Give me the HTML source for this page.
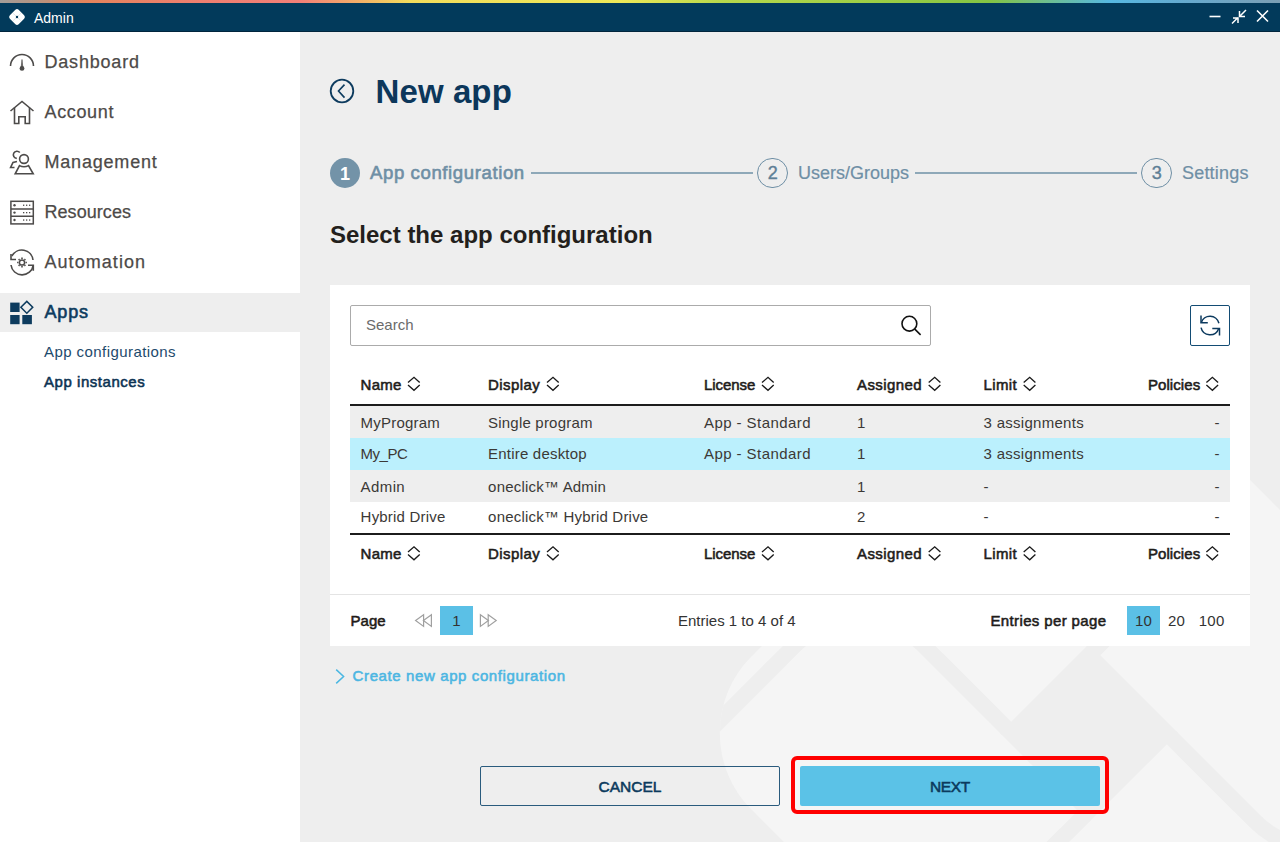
<!DOCTYPE html>
<html><head><meta charset="utf-8">
<style>
*{box-sizing:border-box;margin:0;padding:0}
html,body{width:1280px;height:842px;overflow:hidden;background:#eeeeee;font-family:"Liberation Sans",sans-serif;position:relative}
.a{position:absolute;white-space:nowrap}
.t{position:absolute;white-space:nowrap;line-height:20px;height:20px}
#topstrip{position:absolute;left:0;top:0;width:1280px;height:3px;background:linear-gradient(90deg,#a29c98 0px,#b49482 35px,#e4845c 85px,#ee7f70 200px,#f28078 300px,#f4b068 360px,#f2dc5c 410px,#eee858 620px,#b8d84c 720px,#98cc44 900px,#84c444 990px,#56b8e2 1110px,#64aad0 1180px,#7c9fb4 1280px)}
#titlebar{position:absolute;left:0;top:3px;width:1280px;height:29px;background:#023a5b;border-bottom:1px solid #01253d}
#sidebar{position:absolute;left:0;top:32px;width:300px;height:810px;background:#fff}
.nav{position:absolute;left:44.5px;font-size:18px;color:#4d4a48;-webkit-text-stroke:0.25px #4d4a48}
.sub{position:absolute;left:44px;font-size:15px;color:#1d4a6c}
.panel{position:absolute;left:330px;top:285px;width:920px;height:361px;background:#fff}
.th{position:absolute;font-size:15px;color:#1e1c1a;-webkit-text-stroke-width:0.55px}
.td{position:absolute;font-size:15px;color:#3b3936;letter-spacing:0.2px}
.row{position:absolute;left:350px;width:880px}
</style></head><body>
<!-- watermark -->
<svg class="a" style="left:0;top:0" width="1280" height="842" viewBox="0 0 1280 842">
  <defs>
    <clipPath id="wmclip"><rect x="-293" y="-293" width="586" height="586" rx="109" ry="109"/></clipPath>
  </defs>
  <g transform="translate(1089,733) rotate(45)">
    <g clip-path="url(#wmclip)">
      <rect x="-293" y="-293" width="586" height="586" fill="#f5f5f5"/>
      <rect x="-63" y="-63" width="126" height="126" fill="#eeeeee"/>
      <g fill="none" stroke="#eeeeee" stroke-width="16">
        <path id="tail" d="M60 -55 L180 -55 A90 90 0 0 0 270 -145 L270 -320"/>
        <use href="#tail" transform="rotate(90)"/>
        <use href="#tail" transform="rotate(180)"/>
        <use href="#tail" transform="rotate(270)"/>
      </g>
    </g>
  </g>
</svg>

<div id="topstrip"></div>
<div id="titlebar"></div>
<!-- title logo -->
<svg class="a" style="left:8px;top:8.3px" width="18" height="18" viewBox="0 0 18 18">
  <rect x="2.8" y="2.8" width="12.4" height="12.4" rx="2.3" ry="2.3" fill="#fff" transform="rotate(45 9 9)"/>
  <path d="M5.2 5.4 L12.8 12.6 M12.8 5.4 L5.2 12.6" stroke="#c8d4dc" stroke-width="0.6"/>
  <circle cx="9" cy="9" r="1.2" fill="#023a5b"/>
</svg>
<div class="t" style="left:34px;top:7.5px;font-size:14px;color:#fff">Admin</div>
<!-- window controls -->
<svg class="a" style="left:1200px;top:6px" width="80" height="24" viewBox="0 0 80 24">
  <line x1="9.5" y1="10.5" x2="20.5" y2="10.5" stroke="#fff" stroke-width="1.6"/>
  <g stroke="#fff" stroke-width="1.5" fill="none">
    <path d="M46 4 L39.5 10.5 M39.5 5 L39.5 10.5 L45 10.5"/>
    <path d="M32 17.5 L38 11.5 M33 12 L38 12 L38 17"/>
  </g>
  <path d="M57 4.5 L68 15.5 M68 4.5 L57 15.5" stroke="#fff" stroke-width="1.6"/>
</svg>

<div id="sidebar"></div>
<div class="a" style="left:0;top:293px;width:300px;height:39px;background:#eeeeee"></div>

<!-- sidebar icons -->
<svg class="a" style="left:0;top:40px" width="44" height="300" viewBox="0 40 44 300" fill="none" stroke="#4d4b4a" stroke-width="1.6">
  <!-- dashboard -->
  <path d="M10.5 66 A11.5 11.5 0 1 1 33.5 66"/>
  <path d="M21.2 67 L22 59.5 L22.8 67 Z" fill="#4d4b4a" stroke-width="0.6"/>
  <circle cx="22" cy="68.4" r="2.4" fill="#4d4b4a" stroke="none"/>
  <!-- account -->
  <path d="M10.5 111 L22 101.5 L33.5 111"/>
  <path d="M14.5 107.5 L14.5 123.5 L18.8 123.5 L18.8 116.8 L25.2 116.8 L25.2 123.5 L29.5 123.5 L29.5 107.5"/>
  <!-- management -->
  <circle cx="24" cy="159" r="4.4"/>
  <path d="M15.2 173.8 L33.2 173.8 L28.5 165.6 Q24 168 19.5 165.6 Z"/>
  <path d="M19.8 152.6 A3.6 3.6 0 1 0 16.8 158.4"/>
  <path d="M17 161.5 L13 162.5 L10.6 167.5 L14.5 167.5"/>
  <!-- resources -->
  <rect x="10.9" y="201.3" width="22.4" height="22.6" stroke-width="1.5"/>
  <path d="M11 208.9 L33 208.9 M11 216.3 L33 216.3" stroke-width="1.5"/>
  <g fill="#4d4b4a" stroke="none">
    <circle cx="14.5" cy="205.2" r="1.2"/><circle cx="14.5" cy="212.6" r="1.2"/><circle cx="14.5" cy="220" r="1.2"/>
    <rect x="23" y="204.6" width="1.3" height="1.3"/><rect x="26" y="204.6" width="1.3" height="1.3"/><rect x="29" y="204.6" width="1.3" height="1.3"/>
    <rect x="23" y="212" width="1.3" height="1.3"/><rect x="26" y="212" width="1.3" height="1.3"/><rect x="29" y="212" width="1.3" height="1.3"/>
    <rect x="23" y="219.4" width="1.3" height="1.3"/><rect x="26" y="219.4" width="1.3" height="1.3"/><rect x="29" y="219.4" width="1.3" height="1.3"/>
  </g>
  <!-- automation -->
  <path d="M12 256 A11.2 11.2 0 0 1 33 260"/>
  <path d="M11 254 L11 259.5 L16 259.5"/>
  <path d="M11 265 A11.2 11.2 0 0 0 33.2 265.3"/>
  <path d="M28 265.2 L33.3 265.2 L33.3 270.8"/>
  <circle cx="22" cy="262.5" r="2.6" stroke-width="1.5"/>
  <path d="M22 257.6 V259 M22 266 V267.4 M17.1 262.5 H18.5 M25.5 262.5 H26.9 M18.6 259.1 L19.5 260 M24.5 265 L25.4 265.9 M25.4 259.1 L24.5 260 M19.5 265 L18.6 265.9" stroke-width="1.6"/>
</svg>
<!-- apps icon -->
<svg class="a" style="left:0;top:290px" width="44" height="40" viewBox="0 290 44 40">
  <rect x="10.2" y="302.6" width="9.4" height="9.4" fill="#0d3b5e"/>
  <rect x="10.2" y="315" width="9.4" height="9.2" fill="#0d3b5e"/>
  <rect x="22.3" y="315" width="9.6" height="9.2" fill="#0d3b5e"/>
  <rect x="22.6" y="303.1" width="8.4" height="8.4" fill="none" stroke="#0d3b5e" stroke-width="1.5" transform="rotate(45 26.8 307.3)"/>
</svg>

<div class="nav t" style="top:51.8px;letter-spacing:0.8px">Dashboard</div>
<div class="nav t" style="top:101.8px;letter-spacing:0.65px">Account</div>
<div class="nav t" style="top:151.8px;letter-spacing:0.8px">Management</div>
<div class="nav t" style="top:201.8px;letter-spacing:0.05px">Resources</div>
<div class="nav t" style="top:251.8px;letter-spacing:1.05px">Automation</div>
<div class="nav t" style="top:302.2px;color:#0d3b5e;-webkit-text-stroke:0.6px #0d3b5e;letter-spacing:0.82px">Apps</div>
<div class="sub t" style="top:342.4px;letter-spacing:0.43px">App configurations</div>
<div class="sub t" style="top:371.8px;color:#0c3353;-webkit-text-stroke-width:0.55px;letter-spacing:0.54px">App instances</div>

<!-- header -->
<svg class="a" style="left:328px;top:77px" width="28" height="28" viewBox="0 0 28 28">
  <circle cx="14" cy="14" r="11.3" fill="none" stroke="#0d3b5e" stroke-width="1.8"/>
  <path d="M16.5 7.6 L10.5 14 L16.5 20.6" fill="none" stroke="#0d3b5e" stroke-width="1.6"/>
</svg>
<div class="a" style="left:375.5px;top:74px;font-size:33px;line-height:36px;font-weight:bold;color:#0c375b;letter-spacing:0.1px">New app</div>

<!-- stepper -->
<div class="a" style="left:329.7px;top:158px;width:30px;height:30px;border-radius:50%;background:#7393a8;color:#fff;font-weight:bold;font-size:18px;line-height:32px;text-align:center;padding-left:0.5px">1</div>
<div class="t" style="left:370px;top:163px;font-size:18.6px;color:#6e8fa5;-webkit-text-stroke-width:0.6px;letter-spacing:0.59px">App configuration</div>
<div class="a" style="left:531px;top:172px;width:221.5px;height:1.5px;background:#8ea8b8"></div>
<div class="a" style="left:757.4px;top:157.8px;width:30.7px;height:30.7px;border-radius:50%;border:1.5px solid #6e8fa5;color:#5e7f96;font-size:18px;line-height:29.5px;text-align:center;-webkit-text-stroke:0.4px #5e7f96">2</div>
<div class="t" style="left:798px;top:163px;font-size:18px;color:#6e8fa5;-webkit-text-stroke:0.2px #6e8fa5">Users/Groups</div>
<div class="a" style="left:915px;top:172px;width:222px;height:1.5px;background:#8ea8b8"></div>
<div class="a" style="left:1141.4px;top:157.8px;width:30.7px;height:30.7px;border-radius:50%;border:1.5px solid #6e8fa5;color:#5e7f96;font-size:18px;line-height:29.5px;text-align:center;-webkit-text-stroke:0.4px #5e7f96">3</div>
<div class="t" style="left:1182px;top:163px;font-size:18px;color:#6e8fa5;-webkit-text-stroke:0.2px #6e8fa5;letter-spacing:0.2px">Settings</div>

<div class="t" style="left:330px;top:222.2px;font-size:24px;line-height:26px;height:26px;font-weight:bold;color:#231f1c">Select the app configuration</div>

<!-- panel -->
<div class="panel"></div>
<div class="a" style="left:350px;top:305px;width:581px;height:41px;border:1px solid #a9a9a9;border-top-width:1.6px;border-bottom-width:1.6px;border-color:#ababab;border-radius:2px;background:#fff"></div>
<div class="t" style="left:366px;top:315.3px;font-size:15px;color:#6b6b6b">Search</div>
<svg class="a" style="left:896px;top:310px" width="30" height="30" viewBox="0 0 30 30">
  <circle cx="13.4" cy="13.7" r="7.4" fill="none" stroke="#111" stroke-width="1.6"/>
  <path d="M18.8 19.2 L24.6 24.8" stroke="#111" stroke-width="1.6"/>
</svg>
<div class="a" style="left:1190px;top:305px;width:40px;height:40.5px;border:1.4px solid #134c74;border-radius:2px"></div>
<svg class="a" style="left:1190px;top:305px" width="40" height="40" viewBox="1190 305 40 40" fill="none" stroke="#0c3a5e" stroke-width="1.5">
  <path d="M1201.25 322.66 A9.2 9.2 0 0 1 1218.93 323.27"/>
  <path d="M1201 315.5 L1201 322.8 L1207.8 322.8"/>
  <path d="M1201.04 327.57 A9.2 9.2 0 0 0 1218.64 328.65"/>
  <path d="M1212.3 328.4 L1219.5 328.4 L1219.5 335.4"/>
</svg>

<!-- table -->
<div class="a" style="left:350px;top:404.3px;width:880px;height:2px;background:#1c1c1c"></div>
<div class="row" style="top:406px;height:32px;background:#eeeeee"></div>
<div class="row" style="top:437.7px;height:32px;background:#bbf0fd"></div>
<div class="row" style="top:469.5px;height:32px;background:#eeeeee"></div>
<div class="a" style="left:350px;top:532.6px;width:880px;height:2px;background:#1c1c1c"></div>

<div class="th t" style="left:360.6px;top:375px;letter-spacing:0.25px">Name</div>
<svg class="a" style="left:406px;top:376px" width="16" height="16" viewBox="0 0 16 16"><path d="M2.00 6.55 L8.00 1.30 L13.70 6.55 M2.00 9.10 L8.00 14.25 L13.70 9.10" fill="none" stroke="#1a1a1a" stroke-width="1.35"/></svg>
<div class="th t" style="left:488.1px;top:375px;letter-spacing:0.41px">Display</div>
<svg class="a" style="left:545px;top:376px" width="16" height="16" viewBox="0 0 16 16"><path d="M2.00 6.55 L8.00 1.30 L13.70 6.55 M2.00 9.10 L8.00 14.25 L13.70 9.10" fill="none" stroke="#1a1a1a" stroke-width="1.35"/></svg>
<div class="th t" style="left:704px;top:375px;letter-spacing:-0.06px">License</div>
<svg class="a" style="left:760px;top:376px" width="16" height="16" viewBox="0 0 16 16"><path d="M2.00 6.55 L8.00 1.30 L13.70 6.55 M2.00 9.10 L8.00 14.25 L13.70 9.10" fill="none" stroke="#1a1a1a" stroke-width="1.35"/></svg>
<div class="th t" style="left:857px;top:375px;letter-spacing:0.41px">Assigned</div>
<svg class="a" style="left:926px;top:376px" width="16" height="16" viewBox="0 0 16 16"><path d="M2.70 6.55 L8.70 1.30 L14.40 6.55 M2.70 9.10 L8.70 14.25 L14.40 9.10" fill="none" stroke="#1a1a1a" stroke-width="1.35"/></svg>
<div class="th t" style="left:983.6px;top:375px;letter-spacing:0.36px">Limit</div>
<svg class="a" style="left:1021px;top:376px" width="16" height="16" viewBox="0 0 16 16"><path d="M2.70 6.55 L8.70 1.30 L14.40 6.55 M2.70 9.10 L8.70 14.25 L14.40 9.10" fill="none" stroke="#1a1a1a" stroke-width="1.35"/></svg>
<div class="th t" style="left:1147.9px;top:375px;letter-spacing:0.09px">Policies</div>
<svg class="a" style="left:1204px;top:376px" width="16" height="16" viewBox="0 0 16 16"><path d="M2.40 6.55 L8.40 1.30 L14.10 6.55 M2.40 9.10 L8.40 14.25 L14.10 9.10" fill="none" stroke="#1a1a1a" stroke-width="1.35"/></svg>
<div class="th t" style="left:360.6px;top:544px;letter-spacing:0.25px">Name</div>
<svg class="a" style="left:406px;top:545px" width="16" height="16" viewBox="0 0 16 16"><path d="M2.00 7.05 L8.00 1.80 L13.70 7.05 M2.00 9.60 L8.00 14.75 L13.70 9.60" fill="none" stroke="#1a1a1a" stroke-width="1.35"/></svg>
<div class="th t" style="left:488.1px;top:544px;letter-spacing:0.41px">Display</div>
<svg class="a" style="left:545px;top:545px" width="16" height="16" viewBox="0 0 16 16"><path d="M2.00 7.05 L8.00 1.80 L13.70 7.05 M2.00 9.60 L8.00 14.75 L13.70 9.60" fill="none" stroke="#1a1a1a" stroke-width="1.35"/></svg>
<div class="th t" style="left:704px;top:544px;letter-spacing:-0.06px">License</div>
<svg class="a" style="left:760px;top:545px" width="16" height="16" viewBox="0 0 16 16"><path d="M2.00 7.05 L8.00 1.80 L13.70 7.05 M2.00 9.60 L8.00 14.75 L13.70 9.60" fill="none" stroke="#1a1a1a" stroke-width="1.35"/></svg>
<div class="th t" style="left:857px;top:544px;letter-spacing:0.41px">Assigned</div>
<svg class="a" style="left:926px;top:545px" width="16" height="16" viewBox="0 0 16 16"><path d="M2.70 7.05 L8.70 1.80 L14.40 7.05 M2.70 9.60 L8.70 14.75 L14.40 9.60" fill="none" stroke="#1a1a1a" stroke-width="1.35"/></svg>
<div class="th t" style="left:983.6px;top:544px;letter-spacing:0.36px">Limit</div>
<svg class="a" style="left:1021px;top:545px" width="16" height="16" viewBox="0 0 16 16"><path d="M2.70 7.05 L8.70 1.80 L14.40 7.05 M2.70 9.60 L8.70 14.75 L14.40 9.60" fill="none" stroke="#1a1a1a" stroke-width="1.35"/></svg>
<div class="th t" style="left:1147.9px;top:544px;letter-spacing:0.09px">Policies</div>
<svg class="a" style="left:1204px;top:545px" width="16" height="16" viewBox="0 0 16 16"><path d="M2.40 7.05 L8.40 1.80 L14.10 7.05 M2.40 9.60 L8.40 14.75 L14.10 9.60" fill="none" stroke="#1a1a1a" stroke-width="1.35"/></svg>
<div class="td t" style="left:360.6px;top:412.5px">MyProgram</div>
<div class="td t" style="left:488.1px;top:412.5px">Single program</div>
<div class="td t" style="left:704px;top:412.5px;letter-spacing:0.43px">App - Standard</div>
<div class="td t" style="left:857px;top:412.5px">1</div>
<div class="td t" style="left:983.6px;top:412.5px;letter-spacing:0.28px">3 assignments</div>
<div class="td t" style="left:1200px;top:412.5px;width:19.5px;text-align:right;letter-spacing:0">-</div>
<div class="td t" style="left:360.6px;top:444.2px;letter-spacing:-0.5px">My_PC</div>
<div class="td t" style="left:488.1px;top:444.2px">Entire desktop</div>
<div class="td t" style="left:704px;top:444.2px;letter-spacing:0.43px">App - Standard</div>
<div class="td t" style="left:857px;top:444.2px">1</div>
<div class="td t" style="left:983.6px;top:444.2px;letter-spacing:0.28px">3 assignments</div>
<div class="td t" style="left:1200px;top:444.2px;width:19.5px;text-align:right;letter-spacing:0">-</div>
<div class="td t" style="left:360.6px;top:476.5px;letter-spacing:0.4px">Admin</div>
<div class="td t" style="left:488.1px;top:476.5px">oneclick™ Admin</div>
<div class="td t" style="left:857px;top:476.5px">1</div>
<div class="td t" style="left:983.6px;top:476.5px">-</div>
<div class="td t" style="left:1200px;top:476.5px;width:19.5px;text-align:right;letter-spacing:0">-</div>
<div class="td t" style="left:360.6px;top:507.3px">Hybrid Drive</div>
<div class="td t" style="left:488.1px;top:507.3px">oneclick™ Hybrid Drive</div>
<div class="td t" style="left:857px;top:507.3px">2</div>
<div class="td t" style="left:983.6px;top:507.3px">-</div>
<div class="td t" style="left:1200px;top:507.3px;width:19.5px;text-align:right;letter-spacing:0">-</div>
<!-- pager -->
<div class="a" style="left:330px;top:594px;width:920px;height:1px;background:#e4e4e4"></div>
<div class="th t" style="left:350.5px;top:611.2px;color:#1f1b18;letter-spacing:0.02px">Page</div>
<svg class="a" style="left:412px;top:610px" width="90" height="20" viewBox="412 610 90 20" fill="none" stroke="#a0a0a0" stroke-width="1.2" stroke-linejoin="miter">
  <path d="M423.6 614.8 L415.6 620.6 L423.6 626.4 Z"/>
  <path d="M431.4 614.8 L423.4 620.6 L431.4 626.4 Z"/>
  <path d="M480.4 614.8 L488.4 620.6 L480.4 626.4 Z"/>
  <path d="M488.2 614.8 L496.2 620.6 L488.2 626.4 Z"/>
</svg>
<div class="a" style="left:439.8px;top:605.5px;width:33px;height:29.7px;background:#5bc0e6"></div>
<div class="td t" style="left:439.8px;top:610.5px;width:33px;text-align:center;color:#333;letter-spacing:0">1</div>
<div class="td t" style="left:678px;top:611.2px;color:#333;letter-spacing:0">Entries 1 to 4 of 4</div>
<div class="th t" style="left:990.5px;top:611.4px;letter-spacing:0.36px">Entries per page</div>
<div class="a" style="left:1127px;top:605.5px;width:32.8px;height:29.5px;background:#5bc0e6"></div>
<div class="td t" style="left:1127px;top:610.5px;width:32.8px;text-align:center;color:#333;letter-spacing:0">10</div>
<div class="td t" style="left:1168px;top:610.5px;color:#333">20</div>
<div class="td t" style="left:1198.8px;top:610.5px;color:#333">100</div>

<!-- link -->
<svg class="a" style="left:330px;top:664px" width="20" height="24" viewBox="330 664 20 24">
  <path d="M336.2 669.6 L343.6 676.5 L336.2 683.4" fill="none" stroke="#4ab7e2" stroke-width="1.5"/>
</svg>
<div class="t" style="left:352.6px;top:666.3px;font-size:15px;color:#4cb6e2;-webkit-text-stroke-width:0.55px;letter-spacing:0.61px">Create new app configuration</div>

<!-- buttons -->
<div class="a" style="left:480px;top:766.2px;width:300px;height:40.2px;border:1.7px solid #2a5b7d;border-radius:2px"></div>
<div class="t" style="left:480px;top:777.2px;width:300px;text-align:center;font-size:15.5px;color:#0c3a5d;-webkit-text-stroke-width:0.55px;letter-spacing:0px">CANCEL</div>
<div class="a" style="left:791.2px;top:756.3px;width:318.3px;height:57.5px;border:4.3px solid #ff0000;border-radius:6px"></div>
<div class="a" style="left:800px;top:766.2px;width:300px;height:40px;background:#5bc2e7;border-radius:2px"></div>
<div class="t" style="left:800px;top:777.2px;width:300px;text-align:center;font-size:15.5px;color:#0c3a5d;-webkit-text-stroke-width:0.55px;letter-spacing:-0.35px">NEXT</div>
</body></html>
